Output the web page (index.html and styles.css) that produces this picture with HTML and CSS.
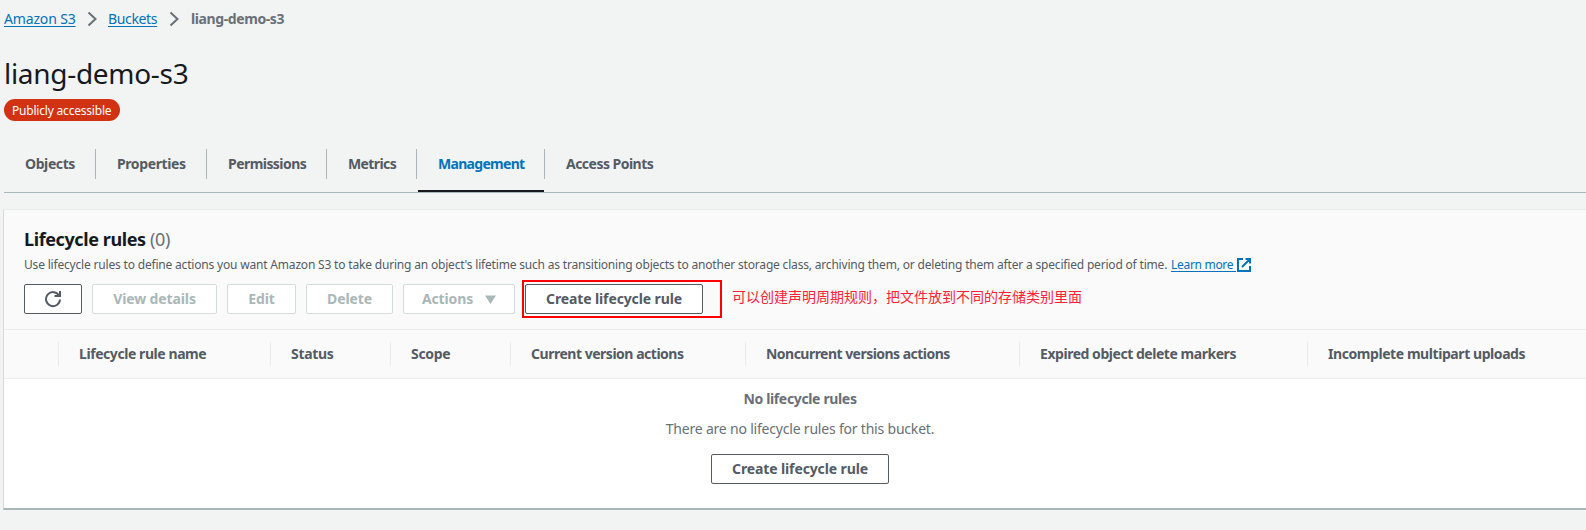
FILE: index.html
```html
<!DOCTYPE html>
<html lang="en">
<head>
<meta charset="utf-8">
<title>liang-demo-s3 - S3 bucket</title>
<link rel="stylesheet" href="styles.css">
</head>
<body>
<nav class="breadcrumbs">
  <a class="link crumb-a" href="#">Amazon S3</a>
  <svg class="chev" viewBox="0 0 10 16"><path d="M1.500 1.500 8.500 8l-7 6.500"/></svg>
  <a class="link crumb-b" href="#">Buckets</a>
  <svg class="chev" viewBox="0 0 10 16"><path d="M1.500 1.500 8.500 8l-7 6.500"/></svg>
  <span class="current">liang-demo-s3</span>
</nav>
<h1 class="title">liang-demo-s3</h1>
<div class="badge"><span>Publicly accessible</span></div>
<div class="tabs">
  <div class="tab t1"><span>Objects</span></div>
  <div class="tab t2"><span>Properties</span></div>
  <div class="tab t3"><span>Permissions</span></div>
  <div class="tab t4"><span>Metrics</span></div>
  <div class="tab t5 active"><span>Management</span></div>
  <div class="tab t6"><span>Access Points</span></div>
</div>
<section class="card">
  <header class="head">
    <h2 class="heading"><span class="name">Lifecycle rules</span> <span class="count">(0)</span></h2>
    <p class="desc"><span class="desc-text">Use lifecycle rules to define actions you want Amazon S3 to take during an object's lifetime such as transitioning objects to another storage class, archiving them, or deleting them after a specified period of time.</span><a class="link learn" href="#">Learn more&nbsp;</a><svg class="ext" viewBox="0 0 14 14"><path d="M6 1H1v12h12V8M8.500 1H13v4.500M12.500 1.500 5 9"/></svg></p>
    <div class="actions">
      <button class="btn refresh"><svg viewBox="0 0 18 18"><path d="M15 5.500A7 7 0 1 0 16 9.500M16 1v5h-5.500"/></svg></button>
      <button class="btn off view">View details</button>
      <button class="btn off edit">Edit</button>
      <button class="btn off delete">Delete</button>
      <button class="btn off menu">Actions<svg viewBox="0 0 11 9"><path d="M0 .5h11L5.500 9z"/></svg></button>
      <div class="marked"><button class="btn create">Create lifecycle rule</button></div>
      <span class="note" lang="zh">可以创建声明周期规则，把文件放到不同的存储类别里面</span>
    </div>
  </header>
  <div class="columns">
    <div class="col c0"></div>
    <div class="col c1"><span>Lifecycle rule name</span></div>
    <div class="col c2"><span>Status</span></div>
    <div class="col c3"><span>Scope</span></div>
    <div class="col c4"><span>Current version actions</span></div>
    <div class="col c5"><span>Noncurrent versions actions</span></div>
    <div class="col c6"><span>Expired object delete markers</span></div>
    <div class="col c7"><span>Incomplete multipart uploads</span></div>
  </div>
  <div class="empty">
    <strong class="empty-title">No lifecycle rules</strong>
    <p class="empty-text">There are no lifecycle rules for this bucket.</p>
    <button class="btn create">Create lifecycle rule</button>
  </div>
</section>
</body>
</html>
```
FILE: styles.css
```css
* { box-sizing: border-box; }
body {
  margin: 0;
  padding-left: 4px;
  height: 530px;
  overflow: hidden;
  background: #f2f3f3;
  color: #545b64;
  font: 14px/20px "Noto Sans", "Open Sans", "Noto Sans CJK SC", sans-serif;
  white-space: nowrap;
}
h1, h2, p { margin: 0; font-weight: 400; }
.link { color: #0073bb; text-decoration: underline; text-underline-offset: 2px; }

.breadcrumbs { display: flex; align-items: center; height: 38px; }
.crumb-a { width: 72px; letter-spacing: -.15px; }
.crumb-b { width: 50px; letter-spacing: -.35px; }
.chev { width: 10px; height: 16px; margin: 0 11px; fill: none; stroke: #687078; stroke-width: 2; }
.current { margin-left: 1px; color: #687078; font-weight: 700; letter-spacing: -.4px; }

.title { height: 61px; padding-top: 17px; color: #16191f; font-size: 28px; line-height: 36px; letter-spacing: -.3px; }
.badge {
  width: 116px; height: 22px; padding-left: 8px; border-radius: 11px;
  background: #d13212; color: #fff; font-size: 12px; line-height: 23px; letter-spacing: -.2px;
}
.tabs { display: flex; height: 72px; padding-top: 28px; border-bottom: 1px solid #aab7b8; }
.tab { position: relative; height: 30px; padding-left: 21px; border-right: 1px solid #aab7b8; font-weight: 700; line-height: 30px; letter-spacing: -.4px; }
.t1 { width: 92px; }
.t2 { width: 111px; }
.t3 { width: 120px; letter-spacing: -.55px; }
.t4 { width: 90px; letter-spacing: -.6px; }
.t5 { width: 128px; letter-spacing: -.7px; }
.t6 { border: 0; letter-spacing: -.52px; }
.active { color: #0073bb; }
.active::after { content: ""; position: absolute; left: 1px; right: 0; bottom: -13px; height: 2px; background: #16191f; }

.card {
  width: 1594px; height: 301px; margin: 16px 0 0 -1px; background: #fff;
  border-top: 1px solid #eaeded; border-left: 1px solid #d5dbdb; border-bottom: 2px solid #aab7b8;
}
.head { height: 120px; padding: 18px 0 0 20px; background: #fafafa; border-bottom: 1px solid #eaeded; }
.heading { height: 25px; font-size: 18px; line-height: 22px; letter-spacing: -.4px; }
.name { color: #16191f; font-weight: 700; }
.count { color: #687078; }
.desc { display: flex; align-items: center; height: 23px; font-size: 12px; line-height: 23px; }
.desc-text { width: 1147px; letter-spacing: -.185px; }
.learn { width: 66px; letter-spacing: -.3px; }
.ext { width: 14px; height: 14px; fill: none; stroke: #0073bb; stroke-width: 2; }
.actions { display: flex; align-items: center; height: 38px; margin-top: 4px; }
.btn {
  display: flex; align-items: center; justify-content: center; flex: none; height: 30px; padding: 0;
  border: 1px solid #545b64; border-radius: 2px; background: #fff; color: #545b64;
  font: 700 14px/20px "Noto Sans", "Open Sans", sans-serif; letter-spacing: -.12px;
}
.off { border-color: #d5dbdb; color: #aab7b8; }
.refresh { width: 58px; margin-right: 10px; }
.refresh svg { width: 18px; height: 18px; fill: none; stroke: #545b64; stroke-width: 2; }
.view { width: 125px; margin-right: 10px; }
.edit { width: 69px; margin-right: 10px; }
.delete { width: 87px; margin-right: 10px; }
.menu { width: 112px; margin-right: 7px; gap: 12px; }
.menu svg { width: 11px; height: 9px; fill: #aab7b8; }
.marked { display: flex; align-items: center; width: 200px; height: 38px; padding-left: 1px; border: 2px solid #fe0000; }
.create { width: 178px; }
.note { margin: 0 0 6px 10px; color: #fe2334; font: 14px/20px "Noto Sans CJK SC", sans-serif; }

.columns { display: flex; align-items: center; height: 49px; background: #fafafa; border-bottom: 1px solid #eaeded; }
.col { height: 24px; padding-left: 20px; border-right: 1px solid #eaeded; font-weight: 700; line-height: 24px; letter-spacing: -.43px; }
.c0 { width: 55px; }
.c1 { width: 212px; }
.c2 { width: 120px; letter-spacing: -.3px; }
.c3 { width: 120px; letter-spacing: -.3px; }
.c4 { width: 235px; letter-spacing: -.48px; }
.c5 { width: 274px; letter-spacing: -.53px; }
.c6 { width: 288px; letter-spacing: -.46px; }
.c7 { border: 0; }
.empty { display: flex; flex-direction: column; align-items: center; padding: 10px 1px 0 0; color: #687078; }
.empty-title { letter-spacing: -.35px; }
.empty-text { margin: 10px 0 15px; letter-spacing: -.2px; }
```
